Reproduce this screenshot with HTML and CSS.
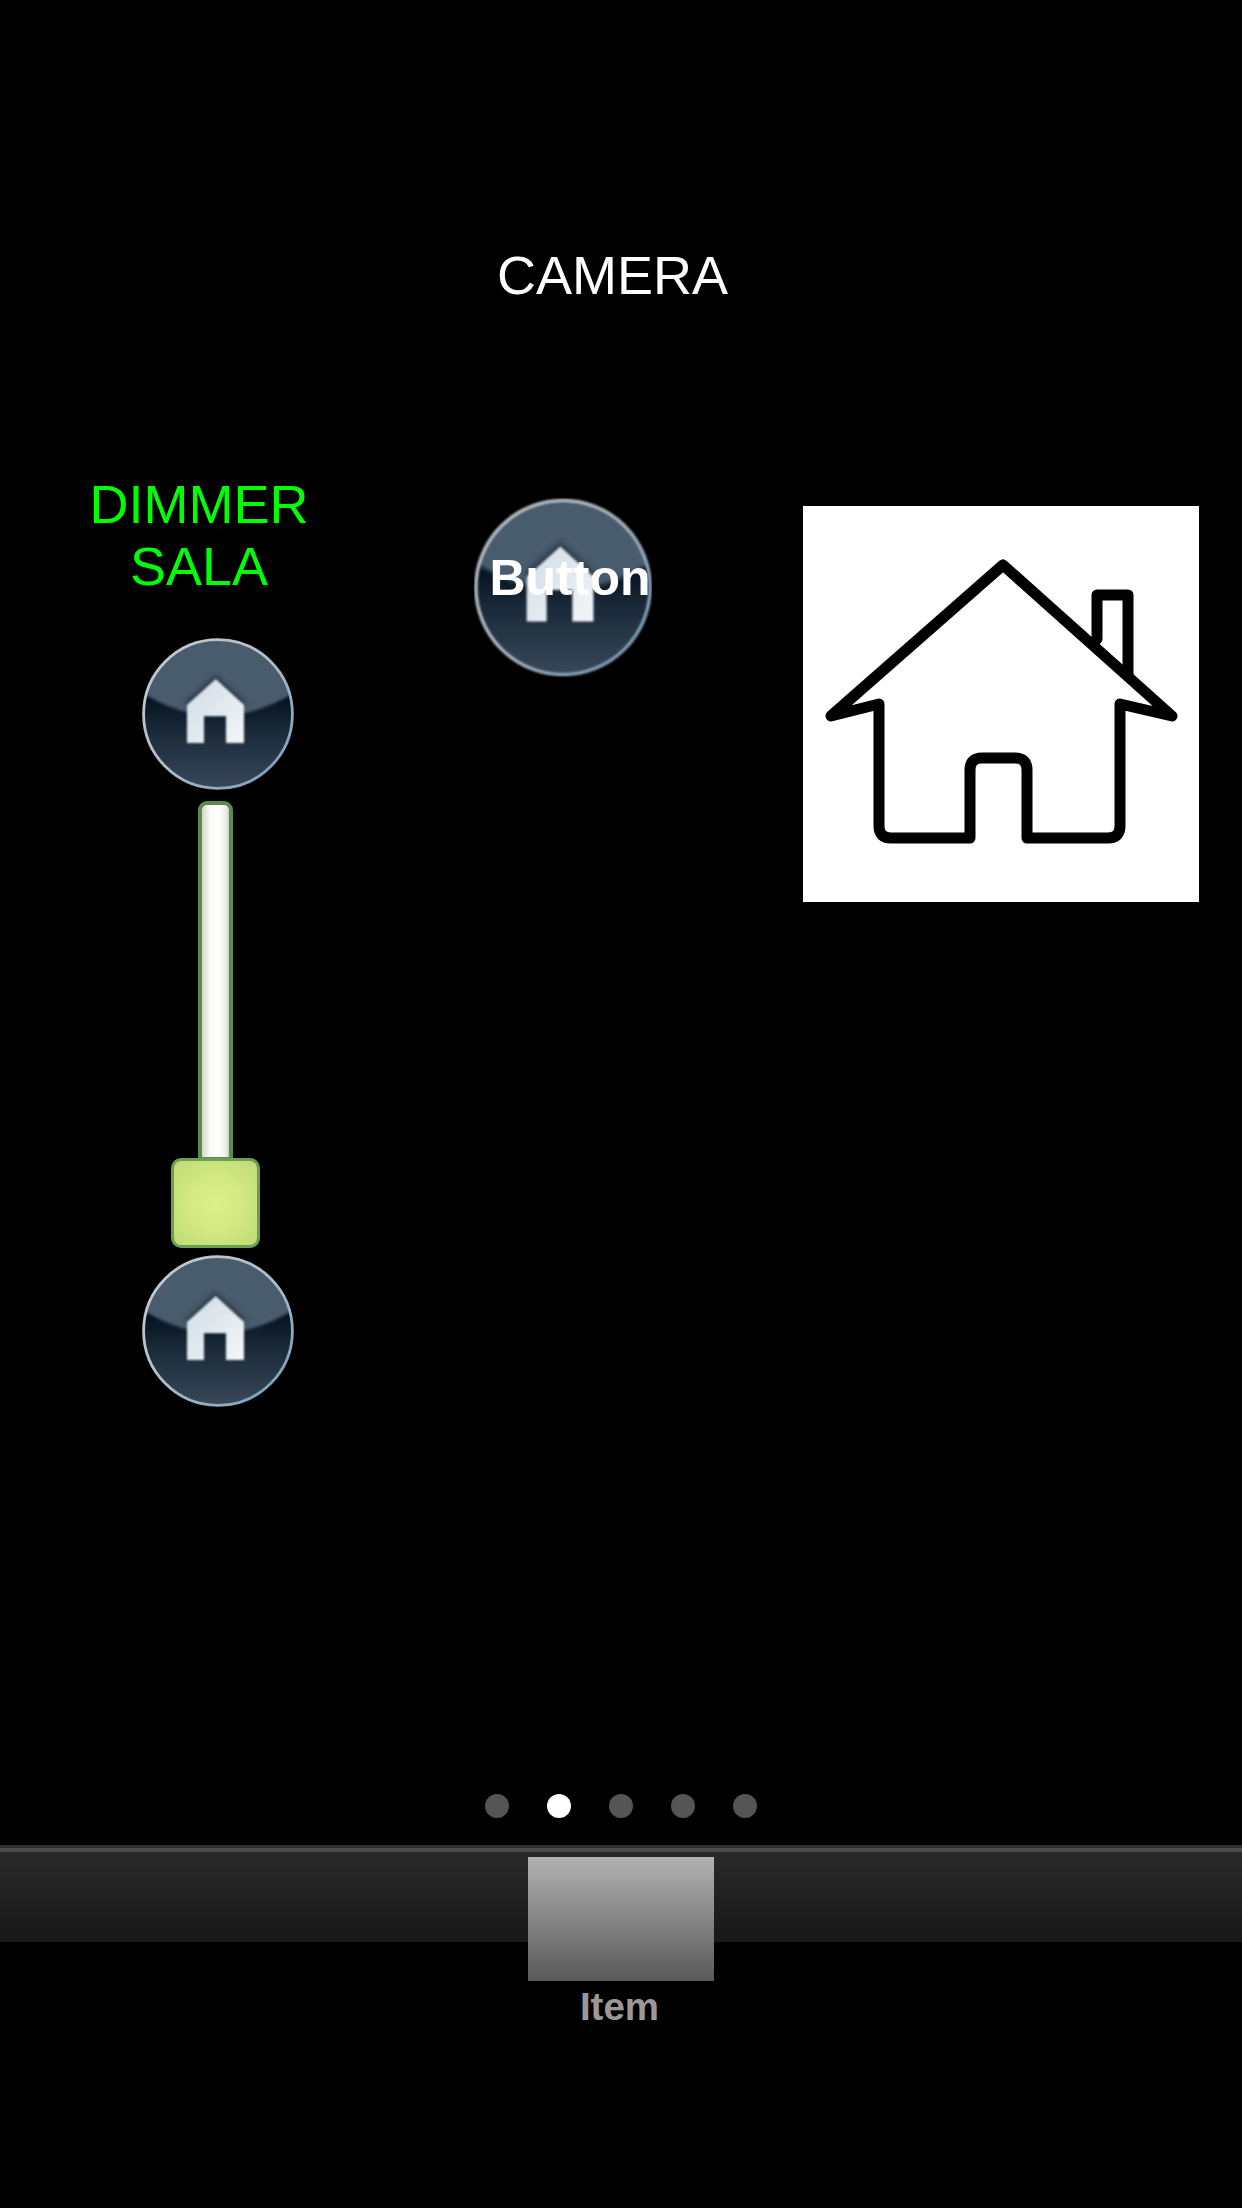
FILE: index.html
```html
<!DOCTYPE html>
<html lang="en">
<head>
<meta charset="utf-8">
<title>Camera</title>
<link rel="stylesheet" href="styles.css">
</head>
<body>
<svg class="defs" width="0" height="0" aria-hidden="true">
  <defs>
    <linearGradient id="ring" x1="0" y1="0" x2="1" y2="1">
      <stop offset="0" stop-color="#c8ccd0"/>
      <stop offset="0.5" stop-color="#b0bcc6"/>
      <stop offset="1" stop-color="#7098b8"/>
    </linearGradient>
    <linearGradient id="lower" x1="0" y1="0" x2="0" y2="1">
      <stop offset="0.40" stop-color="#061320"/>
      <stop offset="0.62" stop-color="#1b2a39"/>
      <stop offset="1" stop-color="#384859"/>
    </linearGradient>
    <linearGradient id="roofshape" x1="0" y1="0" x2="1" y2="1">
      <stop offset="0" stop-color="#cfdbe6"/>
      <stop offset="1" stop-color="#f4f6f8"/>
    </linearGradient>
    <filter id="soft" x="-10%" y="-10%" width="120%" height="120%"><feGaussianBlur stdDeviation="1"/></filter>
    <filter id="arc" x="-10%" y="-10%" width="120%" height="130%"><feGaussianBlur stdDeviation="1.6"/></filter>
    <filter id="softer" x="-20%" y="-20%" width="140%" height="140%"><feGaussianBlur stdDeviation="2.5"/></filter>
    <filter id="ink" x="-5%" y="-5%" width="110%" height="110%"><feGaussianBlur stdDeviation="0.7"/></filter>
    <clipPath id="disc"><circle cx="76" cy="76" r="74"/></clipPath>
    <symbol id="home-btn" viewBox="0 0 152 152">
      <circle cx="76" cy="76" r="74.5" fill="url(#lower)"/>
      <g clip-path="url(#disc)">
        <path d="M-4 52 Q76 104 156 52 V-4 H-4Z" fill="#4a5b6e" filter="url(#arc)"/>
      </g>
      <circle cx="76" cy="76" r="74.4" fill="none" stroke="url(#ring)" stroke-width="2.8" filter="url(#ink)"/>
      <path d="M73.7 37 L106 66 H41Z" fill="#16222f" opacity=".6" filter="url(#softer)"/>
      <path d="M73.7 41 L102 67 V105 H84 V78 H62 V105 H45 V67Z" fill="url(#roofshape)" filter="url(#soft)"/>
    </symbol>
  </defs>
</svg>

<main class="canvas">
  <div class="widget title">CAMERA</div>
  <div class="widget dimmer-label">DIMMER<br>SALA</div>

  <svg class="widget dim-up"><use href="#home-btn"/></svg>
  <div class="widget track"></div>
  <div class="widget thumb"></div>
  <svg class="widget dim-down"><use href="#home-btn"/></svg>

  <svg class="widget big-button"><use href="#home-btn"/></svg>
  <div class="widget big-button-label">Button</div>

  <div class="widget picture">
    <svg class="house" viewBox="0 0 396 396">
      <g filter="url(#ink)">
        <path d="M28 210 L200 59 L369 210 L317 198 V320 Q317 332 305 332 H224 V264 Q224 252 212 252 H179 Q167 252 167 264 V332 H88 Q76 332 76 320 V198Z"/>
        <path d="M294 133 V89 H325 V170"/>
      </g>
    </svg>
  </div>
</main>

<nav class="pager">
  <span class="dot"></span>
  <span class="dot on"></span>
  <span class="dot"></span>
  <span class="dot"></span>
  <span class="dot"></span>
</nav>

<footer class="tabbar">
  <div class="tab">
    <div class="tab-icon"></div>
    <div class="tab-label">Item</div>
  </div>
</footer>
</body>
</html>
```
FILE: styles.css
```css
* { box-sizing: border-box; }
html, body { margin: 0; padding: 0; background: #000; }
body {
  width: 1242px;
  height: 2208px;
  overflow: hidden;
  font-family: "Liberation Sans", Arial, sans-serif;
  display: flex;
  flex-direction: column;
}
.defs { position: absolute; }

.canvas { position: relative; height: 1794px; flex: none; }
.widget { position: absolute; display: block; }

.title {
  left: 497px; top: 244px;
  font-size: 54px; line-height: 62px;
  color: #fff;
}
.dimmer-label {
  left: 59px; top: 473px; width: 280px;
  font-size: 54px; line-height: 62px;
  color: #00ff00;
  text-align: center;
}
.dim-up { left: 142px; top: 638px; width: 152px; height: 152px; }
.dim-down { left: 142px; top: 1255px; width: 152px; height: 152px; }

.track {
  left: 198px; top: 801px; width: 35px; height: 360px;
  border: 4px solid #5f8a4c;
  border-radius: 9px 9px 0 0;
  background: linear-gradient(90deg, #cfdcc8 0%, #fafbf8 30%, #ffffff 60%, #eaf0e6 88%, #c6d6bd 100%);
}
.thumb {
  left: 171px; top: 1158px; width: 89px; height: 90px;
  border: 3px solid #6f9c54;
  border-radius: 10px;
  background: radial-gradient(circle at 50% 50%, #dcee88 0%, #d6ea84 40%, #bcdb74 100%);
}

.big-button { left: 474px; top: 498px; width: 178px; height: 179px; }
.big-button-label {
  left: 480px; top: 550px; width: 180px;
  font-size: 50px; line-height: 56px; font-weight: 700;
  color: #fff;
  text-align: center;
}

.picture { left: 803px; top: 506px; width: 396px; height: 396px; background: #fff; }
.house { display: block; width: 100%; height: 100%; }
.house path {
  fill: none;
  stroke: #000;
  stroke-width: 11;
  stroke-linejoin: round;
  stroke-linecap: round;
}

.pager {
  flex: none;
  height: 51px;
  display: flex;
  justify-content: center;
  gap: 38.2px;
}
.dot { width: 24px; height: 24px; border-radius: 50%; background: #555; }
.dot.on { background: #fff; }

.tabbar {
  flex: none;
  height: 97px;
  display: flex;
  justify-content: center;
  padding-top: 9px;
  border-top: 3px solid #2e2e2e;
  background:
    linear-gradient(#4c4c4c, #4c4c4c) top / 100% 4px no-repeat,
    linear-gradient(#2a2a2a, #181818);
}
.tab { width: 186px; margin-left: -1px; display: flex; flex-direction: column; align-items: center; }
.tab-icon {
  width: 100%;
  height: 124px;
  flex: none;
  background: linear-gradient(#b2b2b2, #595959);
}
.tab-label {
  margin: 4px 2px 0 0;
  font-size: 38.5px;
  line-height: 44px;
  font-weight: 700;
  color: #999;
}
```
